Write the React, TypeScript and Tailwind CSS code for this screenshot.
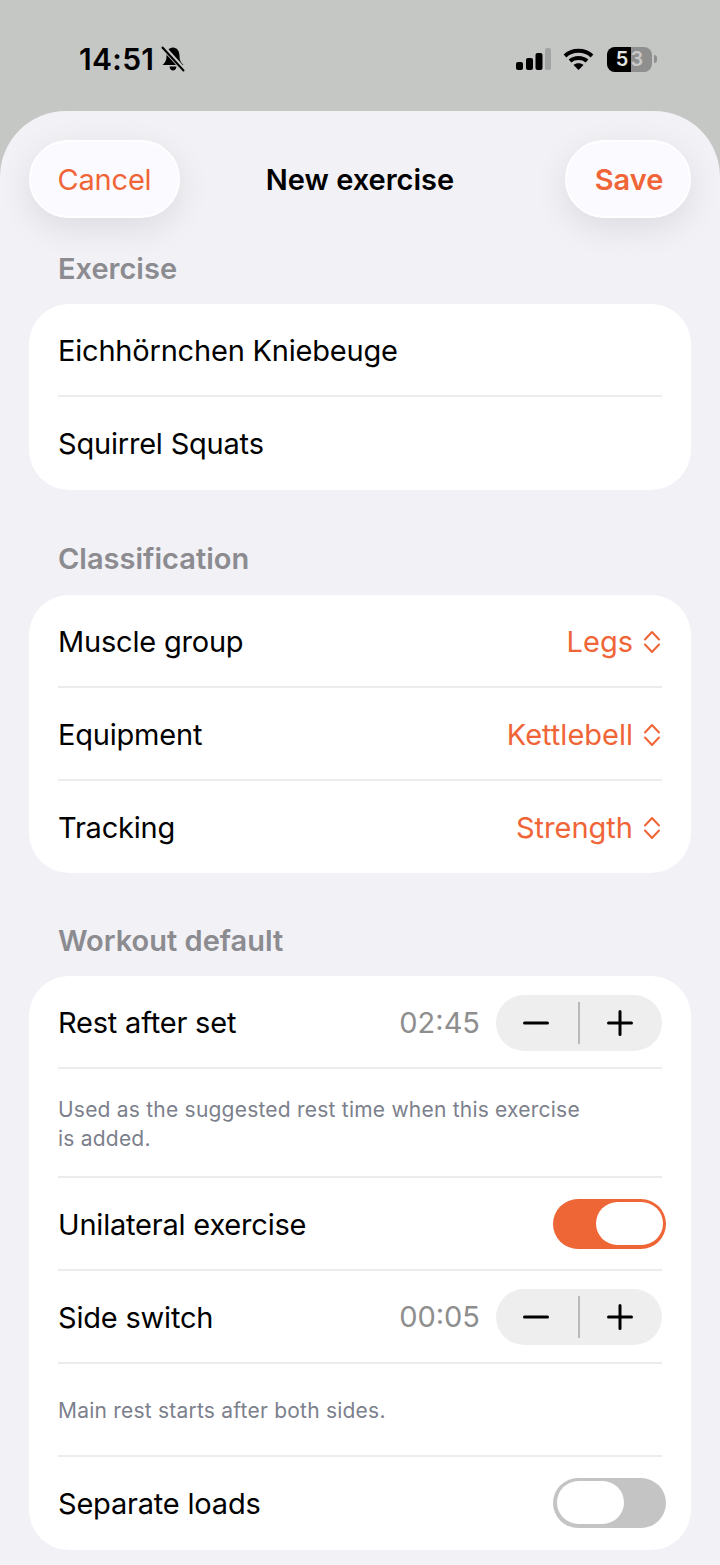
const Chevrons = () => (
  <svg className="mr-[1px]" width="18" height="24" viewBox="0 0 18 24" fill="none" stroke="#f06537" strokeWidth="2" strokeLinecap="round" strokeLinejoin="round">
    <path d="M2 9.5 L9 2 L16 9.5" />
    <path d="M2 14.5 L9 22 L16 14.5" />
  </svg>
)

const Divider = () => <div className="h-[2px] bg-[#ececee]" />

const SectionLabel = ({ children, className }: { children: string; className: string }) => (
  <div className={`pl-[58px] text-[29px] leading-[36px] font-semibold text-[#8b8b90] ${className}`}>{children}</div>
)

const Row = ({ label, children }: { label: string; children?: React.ReactNode }) => (
  <div className="h-[91px] pt-[2px] flex items-center justify-between text-[29px] tracking-[-0.2px] text-black">
    <span>{label}</span>
    {children}
  </div>
)

const Picker = ({ value }: { value: string }) => (
  <div className="flex items-center gap-[10px] tracking-normal text-[#f06537]">
    <span>{value}</span>
    <Chevrons />
  </div>
)

const Stepper = ({ time, raised }: { time: string; raised?: boolean }) => (
  <div className={`flex items-center gap-[16px] tracking-normal ${raised ? "-mt-[2px]" : ""}`}>
    <span className="text-[#8e8e8e]">{time}</span>
    <div className="w-[166px] h-[56px] rounded-full bg-[#eeeeee] flex items-center">
      <div className="flex-1 flex justify-center pr-[3px]">
        <svg width="26" height="26" viewBox="0 0 26 26"><path d="M1.5 13 H24.5" stroke="#000" strokeWidth="3" strokeLinecap="round" /></svg>
      </div>
      <div className="w-[2px] h-[42px] -ml-[1px] bg-[#b9b9b9]" />
      <div className="flex-1 flex justify-center pr-[2px]">
        <svg width="26" height="26" viewBox="0 0 26 26"><path d="M1.5 13 H24.5 M13 1.5 V24.5" stroke="#000" strokeWidth="3" strokeLinecap="round" /></svg>
      </div>
    </div>
  </div>
)

const Toggle = ({ on }: { on: boolean }) => (
  <div className={`w-[113px] h-[50px] -mr-[4px] -mt-[2px] rounded-full flex items-center ${on ? "bg-[#ee6536] justify-end pr-[3px]" : "bg-[#c4c4c4] justify-start pl-[4px]"}`}>
    <div className="w-[67px] h-[43px] rounded-full bg-white" />
  </div>
)

const Note = ({ children }: { children: React.ReactNode }) => (
  <div className="text-[21px] leading-[29px] tracking-[0.22px] text-[#7c7f8c]">{children}</div>
)

const StatusBar = () => (
  <div className="h-[111px] flex items-start justify-between pt-[41px] pl-[79px] pr-[63px]">
    <div className="flex items-center gap-[7px]">
      <span className="text-[30px] leading-[36px] tracking-[0.3px] font-semibold text-black">14:51</span>
      <svg width="24" height="26" viewBox="0 0 24 26">
        <path d="M12 1.5 C8 1.5 5.5 5 5.5 10 C5.5 14 4.5 16 1.5 19 H22.5 C19.5 16 18.5 14 18.5 10 C18.5 5 16 1.5 12 1.5 Z" fill="#000" />
        <path d="M8.5 20.5 H15.5 C15 23.5 13.5 24.5 12 24.5 C10.5 24.5 9 23.5 8.5 20.5 Z" fill="#000" />
        <path d="M2 1 L23 24" stroke="#c5c7c5" strokeWidth="5" />
        <path d="M1.5 1.5 L22.5 24.5" stroke="#000" strokeWidth="2" strokeLinecap="round" />
      </svg>
    </div>
    <div className="flex items-center gap-[12px] h-[36px]">
      <svg width="35" height="23" viewBox="0 0 35 23">
        <rect x="0" y="14" width="7" height="8" rx="2" fill="#000" />
        <rect x="10" y="10" width="7" height="12" rx="2" fill="#000" />
        <rect x="19.5" y="5" width="7" height="17" rx="2" fill="#000" />
        <rect x="29" y="0" width="6" height="22" rx="2" fill="#a2a4a3" />
      </svg>
      <svg width="31" height="23" viewBox="0 0 31 23" fill="none" stroke="#000">
        <path d="M2 8 C9 1 22 1 29 8" strokeWidth="4" />
        <path d="M7 13 C11.5 9 19.5 9 24 13" strokeWidth="4" />
        <path d="M15.5 22 L10.5 17 C13 14.5 18 14.5 20.5 17 Z" fill="#000" stroke="none" />
      </svg>
      <div className="flex items-center ml-[1px]">
        <div className="relative w-[45px] h-[25px] rounded-[8px] overflow-hidden bg-[#8f8f8f]">
          <div className="w-[24px] h-full bg-black" />
          <div className="absolute inset-0 flex items-center justify-center gap-[2px] text-[20px] font-semibold">
            <span className="text-[#e4e4e4]">5</span>
            <span className="text-[#c9c9c9]">3</span>
          </div>
        </div>
        <div className="w-[3px] h-[8px] ml-[2px] rounded-r-full bg-[#8f8f8f]" />
      </div>
    </div>
  </div>
)

const Header = () => (
  <div className="pt-[29px] px-[29px] grid grid-cols-[1fr_auto_1fr] items-center">
    <div className="justify-self-start h-[78px] w-[151px] pt-[2px] rounded-full bg-[#fbfaff] border-[2px] border-white shadow-[0_10px_34px_rgba(0,0,0,0.09)] flex items-center justify-center text-[29px] tracking-[-0.2px] text-[#f06537]">
      Cancel
    </div>
    <div className="pt-[2px] text-[29px] font-semibold text-black">New exercise</div>
    <div className="justify-self-end h-[78px] w-[126px] pt-[2px] pl-[2px] rounded-full bg-[#fbfaff] border-[2px] border-white shadow-[0_10px_34px_rgba(0,0,0,0.09)] flex items-center justify-center text-[29px] font-semibold text-[#f06537]">
      Save
    </div>
  </div>
)

export default function App() {
  return (
    <div className="h-[1565px] overflow-hidden bg-[#c5c7c5] font-['Inter',sans-serif]">
      <StatusBar />
      <div className="h-[1454px] rounded-t-[66px] bg-[#f1f1f6]">
        <Header />
        <SectionLabel className="mt-[33px]">Exercise</SectionLabel>
        <div className="mt-[17px] mx-[29px] px-[29px] pb-[2px] rounded-[40px] bg-white">
          <Row label="Eichhörnchen Kniebeuge" />
          <Divider />
          <Row label="Squirrel Squats" />
        </div>
        <SectionLabel className="mt-[51px]">Classification</SectionLabel>
        <div className="mt-[18px] mx-[29px] px-[29px] pb-[1px] rounded-[40px] bg-white">
          <Row label="Muscle group"><Picker value="Legs" /></Row>
          <Divider />
          <Row label="Equipment"><Picker value="Kettlebell" /></Row>
          <Divider />
          <Row label="Tracking"><Picker value="Strength" /></Row>
        </div>
        <SectionLabel className="mt-[50px]">Workout default</SectionLabel>
        <div className="mt-[17px] mx-[29px] px-[29px] pb-[2px] rounded-[40px] bg-white">
          <Row label="Rest after set"><Stepper time="02:45" /></Row>
          <Divider />
          <div className="h-[107px] pt-[2px] flex items-center">
            <Note>Used as the suggested rest time when this exercise<br />is added.</Note>
          </div>
          <Divider />
          <Row label="Unilateral exercise"><Toggle on /></Row>
          <Divider />
          <Row label="Side switch"><Stepper time="00:05" raised /></Row>
          <Divider />
          <div className="h-[91px] pt-[2px] flex items-center">
            <Note>Main rest starts after both sides.</Note>
          </div>
          <Divider />
          <Row label="Separate loads"><Toggle on={false} /></Row>
        </div>
      </div>
    </div>
  )
}
